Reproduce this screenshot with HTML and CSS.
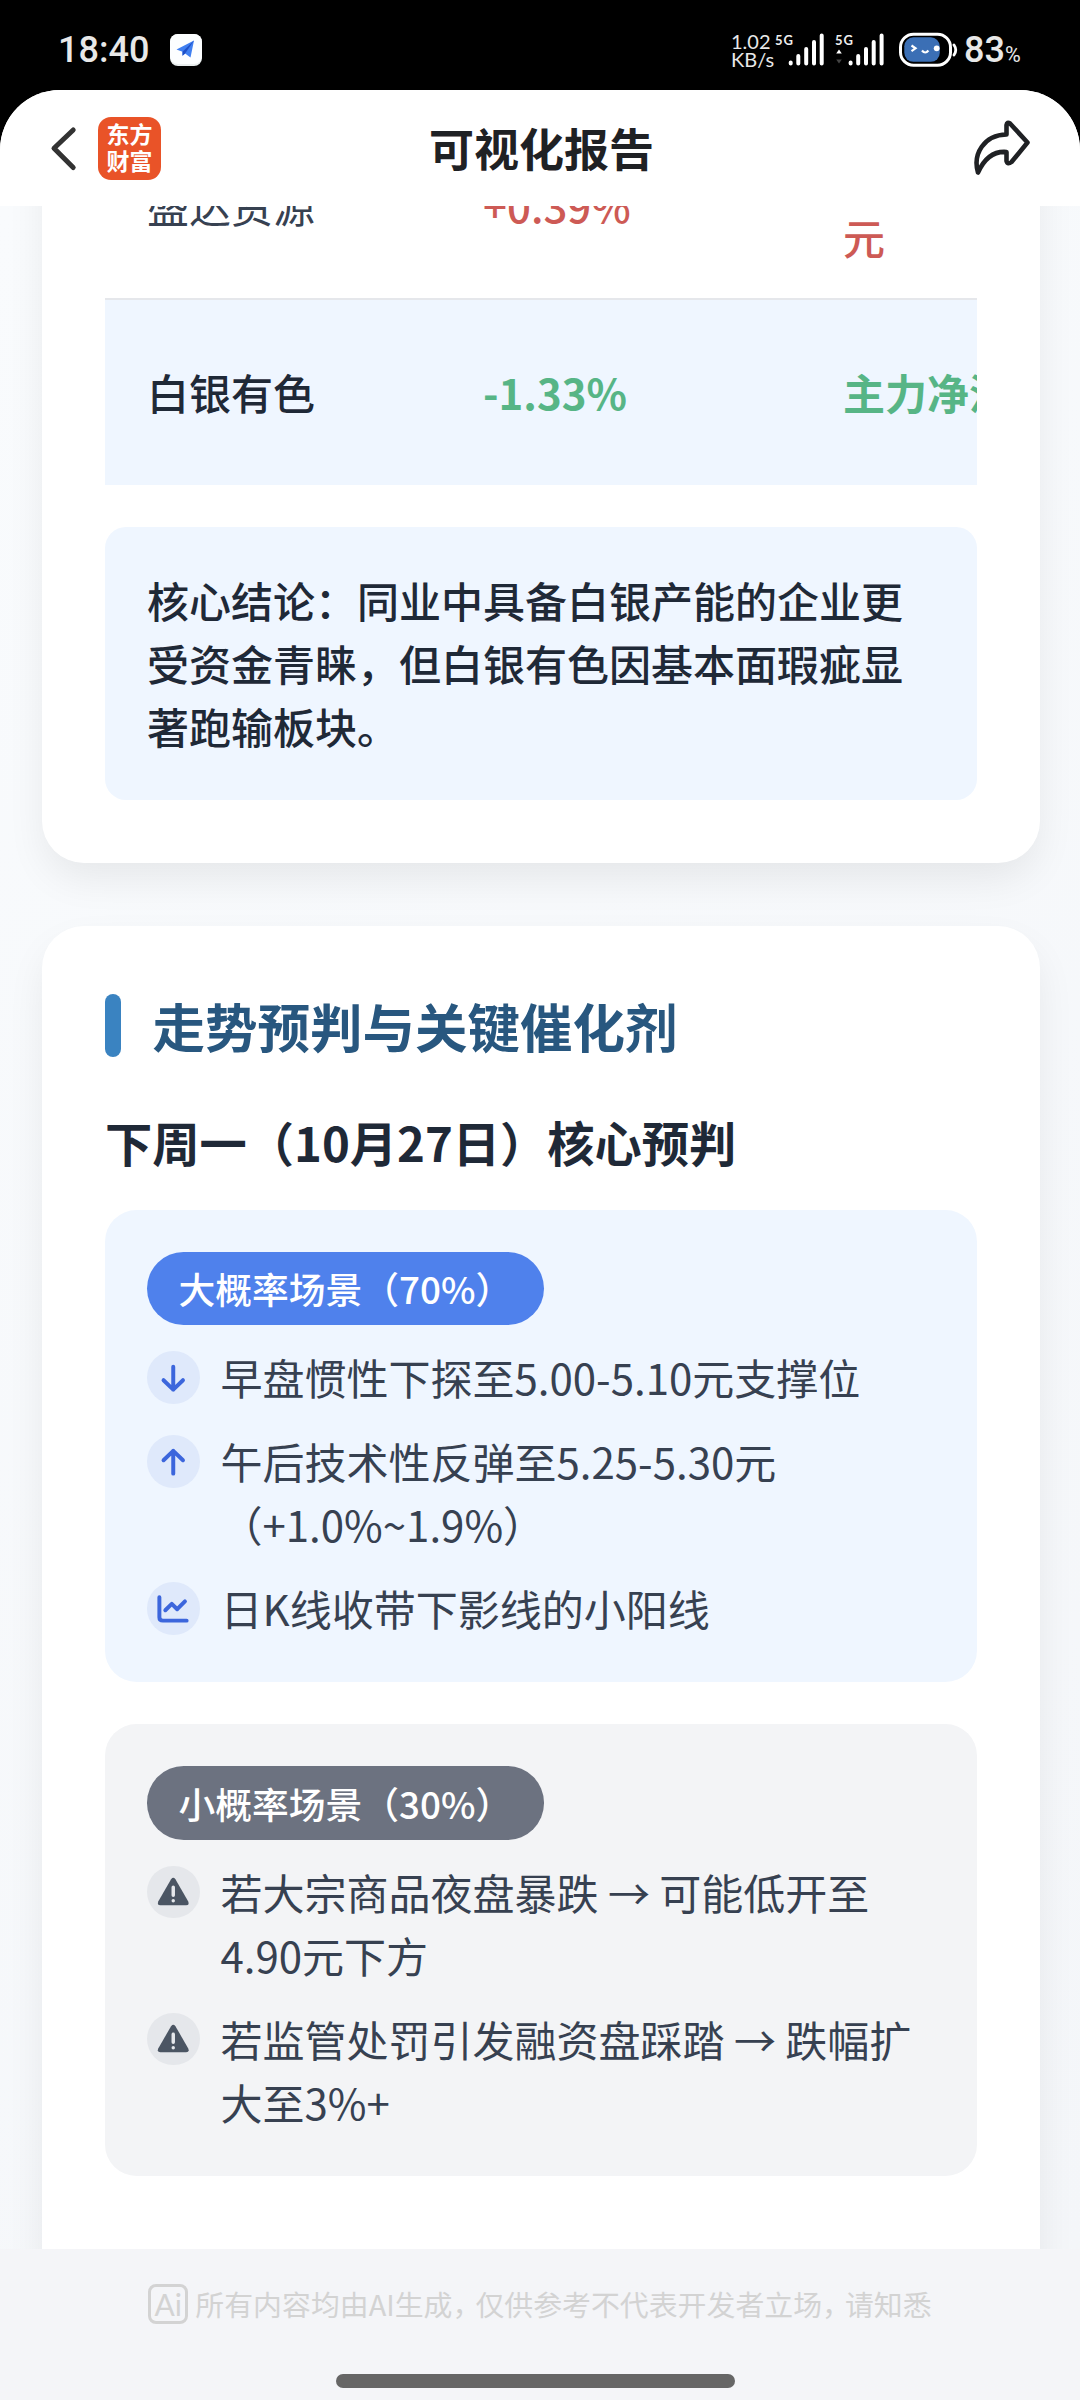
FILE: index.html
```html
<!DOCTYPE html>
<html lang="zh-CN">
<head>
<meta charset="utf-8">
<title>可视化报告</title>
<link rel="stylesheet" href="styles.css">
</head>
<body>
<div class="status">
  <span class="time">18:40</span>
  <svg class="plane" width="32" height="32" viewBox="0 0 32 32"><rect width="32" height="32" rx="8" fill="#e9eeee"/><rect width="32" height="30" rx="8" fill="#fcfeff"/><path d="M24 6.500L6.500 15.500l6 2.300v4l2.600-2.300 5.400 4z" fill="#3f7ff0"/><path d="M24 6.500L12.500 17.800v4l2.600-2.300z" fill="#1e50c8"/></svg>
  <span class="speed"><span>1.02</span><span>KB/s</span></span>
  <svg class="signals" width="112" height="36" viewBox="774 32 112 36">
    <text x="775" y="45.300" class="net" textLength="18">5G</text>
    <text x="835" y="45.300" class="net" textLength="18">5G</text>
    <g stroke="#fff" stroke-width="4" stroke-linecap="round"><path d="M790.700 62.500v1M798.300 56v7.500M806.200 49v14.500M814 42v21.500M821.700 35.500v28M850.600 62.500v1M858.200 56v7.500M866 49v14.500M873.700 42v21.500M881.600 35.500v28"/></g>
    <path d="M836.200 53.500h5.600l-2.800-4z" fill="#fff"/><path d="M836.200 59.500h5.600l-2.800 4z" fill="#444"/>
  </svg>
  <svg class="battery" width="60" height="36" viewBox="898 32 60 36">
    <rect x="900.500" y="34.200" width="50" height="31" rx="13" fill="none" stroke="#fff" stroke-width="3"/>
    <rect x="904.300" y="37.300" width="35.500" height="24.500" rx="9" fill="#3b6fb5"/>
    <path d="M954 45q3.500 5 0 10" fill="none" stroke="#fff" stroke-width="2.800" stroke-linecap="round"/>
    <path d="M911.500 45.500l4 2.800-4 2.800M922 50.500q3.200 4 6.400 0" fill="none" stroke="#fff" stroke-width="2.200"/><circle cx="936.700" cy="48.300" r="2.900" fill="#fff"/>
  </svg>
  <span class="level">83</span><span class="percent">%</span>
</div>
<main class="app">
  <header class="bar">
    <svg class="back" width="28" height="50" viewBox="49 122 28 50"><path d="M73.200 129L54 147.300l19.200 19.200" fill="none" stroke="#333" stroke-width="5" stroke-linecap="round" stroke-linejoin="round"/></svg>
    <div class="logo"><span>东方</span><span>财富</span></div>
    <h1>可视化报告</h1>
    <svg class="share" width="62" height="60" viewBox="972 118 62 60"><path d="M978 172.500C972.500 154 984 135 1006.500 134.500V125Q1007 121.500 1010 123.500L1027.500 142.500 1011.500 162Q1007.500 165 1006.500 161V152Q988 150.500 978 172.500Z" fill="none" stroke="#1f2124" stroke-width="4.600" stroke-linejoin="round"/></svg>
  </header>
  <section class="view">
    <article class="card first">
      <div class="table">
        <div class="row"><span>盛达资源</span><span class="up">+0.39%</span><span class="up"><br>元</span></div>
        <div class="row own"><span>白银有色</span><span class="down">-1.33%</span><span class="down">主力净流</span></div>
      </div>
      <p class="conclusion">核心结论：同业中具备白银产能的企业更受资金青睐，但白银有色因基本面瑕疵显著跑输板块。</p>
    </article>
    <article class="card">
      <h2>走势预判与关键催化剂</h2>
      <h3>下周一（10月27日）核心预判</h3>
      <div class="scene likely">
        <span class="pill">大概率场景（70%）</span>
        <div class="item"><i class="dot"><svg viewBox="0 0 53 53"><path d="M26.500 16v23M16.700 29.500l9.800 9.500 9.800-9.500"/></svg></i><p>早盘惯性下探至5.00-5.10元支撑位</p></div>
        <div class="item"><i class="dot"><svg viewBox="0 0 53 53"><path d="M26.500 39V16M16.700 25.500l9.800-9.500 9.800 9.500"/></svg></i><p>午后技术性反弹至5.25-5.30元<br>（+1.0%~1.9%）</p></div>
        <div class="item"><i class="dot"><svg viewBox="0 0 53 53"><path d="M12.500 15.500V35.500q0 3.500 3.500 3.500H40M18.500 28.500l6.500-6.500 5.500 5.500 7.800-8"/></svg></i><p>日K线收带下影线的小阳线</p></div>
      </div>
      <div class="scene unlikely">
        <span class="pill">小概率场景（30%）</span>
        <div class="item"><i class="dot"><svg viewBox="0 0 53 53"><path class="warn" d="M24.300 13.300q2.200-2.800 4.400 0L41.500 35.500q1.800 4-2 4.200h-26q-3.800-.2-2-4.200z"/><path class="mark" d="M26.500 21.500v8M26.500 35v.1"/></svg></i><p>若大宗商品夜盘暴跌 → 可能低开至4.90元下方</p></div>
        <div class="item"><i class="dot"><svg viewBox="0 0 53 53"><path class="warn" d="M24.300 13.300q2.200-2.800 4.400 0L41.500 35.500q1.800 4-2 4.200h-26q-3.800-.2-2-4.200z"/><path class="mark" d="M26.500 21.500v8M26.500 35v.1"/></svg></i><p>若监管处罚引发融资盘踩踏 → 跌幅扩大至3%+</p></div>
      </div>
    </article>
  </section>
  <footer>
    <div class="notice"><span class="ai">Ai</span><span>所有内容均由AI生成<span class="comma">，</span>仅供参考不代表开发者立场<span class="comma">，</span>请知悉</span></div>
    <div class="home"></div>
  </footer>
</main>
</body>
</html>
```
FILE: styles.css
```css
* { box-sizing: border-box; margin: 0; padding: 0; }
body {
  width: 1080px; height: 2400px; overflow: hidden; background: #000;
  display: flex; flex-direction: column;
  font-family: "Noto Sans CJK SC", sans-serif; font-size: 42px; line-height: 63px; color: #374151;
}
svg { display: block; flex: none; }

.status { height: 90px; flex: none; display: flex; align-items: center; padding: 10px 50px 0 58px; color: #e8e8e8; font-family: Roboto, sans-serif; white-space: nowrap; }
.time { width: 112px; font-size: 36px; font-weight: 500; line-height: 40px; }
.speed { margin-left: 529px; width: 43px; display: flex; flex-direction: column; font-family: Lato, sans-serif; font-size: 20px; line-height: 18px; }
.net { font: 700 13px Lato, sans-serif; fill: #eee; }
.battery { margin-left: 12px; }
.level { margin-left: 6px; font-size: 36px; font-weight: 500; line-height: 40px; }
.percent { font-size: 21.500px; line-height: 22px; padding-top: 9px; font-weight: 400; }

.app { flex: 1; min-height: 0; display: flex; flex-direction: column; background: #fff; border-radius: 60px 60px 0 0; overflow: hidden; }
.bar { height: 116px; flex: none; display: flex; align-items: center; justify-content: space-between; padding: 0 46px 0 49px; background: #fff; }
.logo { width: 63px; height: 63px; margin-left: 21px; margin-right: auto; border-radius: 13px; background: #e95328; color: #fff; display: flex; flex-direction: column; align-items: center; justify-content: center; font-size: 23px; line-height: 27px; font-weight: 700; padding-bottom: 3px; }
.bar h1 { margin-right: 318px; font-size: 45px; font-weight: 600; color: #1f2124; line-height: 60px; padding-bottom: 1px; }

.view { flex: 1; min-height: 0; overflow: hidden; padding: 0 40px 0 42px; background: linear-gradient(135deg, #f9fbfd, #f4f6f9); }
.card { background: #fff; border-radius: 42px; padding: 63px 63px 80px; box-shadow: 0 18px 40px -4px rgba(0, 0, 0, .08); margin-bottom: 63px; }
.first { margin-top: -156px; padding-bottom: 63px; }
.table { overflow: hidden; margin-bottom: 42px; }
.row { display: grid; grid-template-columns: 336px 360px 300px; align-items: center; padding: 0 0 2px 42px; height: 187px; border-bottom: 2px solid #e5e7eb; white-space: nowrap; }
.own { height: 185px; border: 0; background: #eff6ff; color: #1f2937; font-weight: 500; }
.up { color: #cd5a55; font-weight: 500; }
.down { color: #57b586; font-weight: 700; }
.conclusion { background: #eff6ff; border-radius: 21px; padding: 41px 42px 43px; color: #1f2937; font-weight: 500; }

h2 { display: flex; align-items: center; gap: 31.500px; font-size: 52.500px; line-height: 73.500px; font-weight: 700; color: #28577f; }
h2::before { content: ""; width: 16px; height: 63px; border-radius: 8px; background: #3a83c1; }
h3 { margin: 47px 0 37px; font-size: 47.250px; line-height: 63px; font-weight: 700; color: #1f2937; }
.scene { border-radius: 31.500px; padding: 42px; margin-bottom: 42px; display: flex; flex-direction: column; align-items: flex-start; gap: 21px; }
.likely { background: #eff6ff; }
.unlikely { background: #f3f4f6; }
.pill { height: 73.500px; border-radius: 36.750px; padding: 0 31.500px; background: #4f81ec; color: #fff; font-size: 36.750px; line-height: 73.500px; font-weight: 500; }
.unlikely .pill { background: #6c7280; line-height: 75px; }
.item { display: flex; align-items: flex-start; gap: 21px; }
.item p { margin: -1px 0 1px; }
.dot { flex: none; width: 52.500px; height: 52.500px; margin-top: 5.250px; border-radius: 50%; background: #dfe9fb; }
.unlikely .dot { background: #e5e7eb; }
.dot path { fill: none; stroke: #3c66dc; stroke-width: 4; stroke-linecap: round; stroke-linejoin: round; }
.dot .warn { fill: #4b5563; stroke: none; }
.dot .mark { stroke: #e5e7eb; stroke-width: 3.500; }

footer { height: 151px; flex: none; background: #f4f5f8; display: flex; flex-direction: column; align-items: center; }
.notice { margin-top: 35px; height: 40px; display: flex; align-items: center; gap: 7px; font-size: 28.900px; line-height: 38px; color: #d3d3d3; white-space: nowrap; }
.notice > span:last-child { padding-bottom: 2px; }
.ai { width: 40px; height: 40px; border: 3px solid #d3d3d3; border-radius: 8px; text-align: center; font-family: Lato, sans-serif; font-size: 30px; line-height: 35px; }
.comma { letter-spacing: -6px; }
.home { margin-top: 50px; width: 399px; height: 14px; border-radius: 7px; background: #666; margin-right: 9px; }
```
